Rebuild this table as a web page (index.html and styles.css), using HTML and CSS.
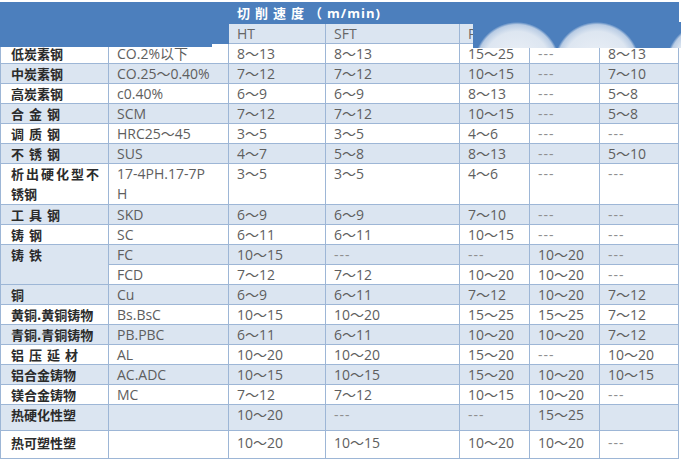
FILE: index.html
```html
<!DOCTYPE html>
<html lang="zh">
<head>
<meta charset="utf-8">
<title>切削速度</title>
<link rel="stylesheet" href="styles.css">
</head>
<body>
<div class="sheet">
<table class="speed">
<colgroup>
<col class="w1"><col class="w2"><col class="w3"><col class="w4"><col class="w5"><col class="w6"><col class="w7">
</colgroup>
<thead>
<tr class="h1"><th class="corner" rowspan="2" colspan="2"></th><th class="title" colspan="5"><span class="tc">切削速度（</span><span class="tl">m/min)</span></th></tr>
<tr class="h2"><th>HT</th><th>SFT</th><th>P</th><th></th><th>T</th></tr>
</thead>
<tbody>
<tr><td class="name">低炭素钢</td><td>CO.2%以下</td><td>8～13</td><td>8～13</td><td>15～25</td><td class="dash">---</td><td>8～13</td></tr>
<tr class="b"><td class="name">中炭素钢</td><td>CO.25～0.40%</td><td>7～12</td><td>7～12</td><td>10～15</td><td class="dash">---</td><td>7～10</td></tr>
<tr><td class="name">高炭素钢</td><td>c0.40%</td><td>6～9</td><td>6～9</td><td>8～13</td><td class="dash">---</td><td>5～8</td></tr>
<tr class="b"><td class="name sp">合金钢</td><td>SCM</td><td>7～12</td><td>7～12</td><td>10～15</td><td class="dash">---</td><td>5～8</td></tr>
<tr><td class="name sp">调质钢</td><td>HRC25～45</td><td>3～5</td><td>3～5</td><td>4～6</td><td class="dash">---</td><td class="dash">---</td></tr>
<tr class="b"><td class="name sp">不锈钢</td><td>SUS</td><td>4～7</td><td>5～8</td><td>8～13</td><td class="dash">---</td><td>5～10</td></tr>
<tr class="tall"><td class="name"><span class="just">析出硬化型不</span><br>锈钢</td><td>17-4PH.17-7P<br>H</td><td>3～5</td><td>3～5</td><td>4～6</td><td class="dash">---</td><td class="dash">---</td></tr>
<tr class="b"><td class="name sp">工具钢</td><td>SKD</td><td>6～9</td><td>6～9</td><td>7～10</td><td class="dash">---</td><td class="dash">---</td></tr>
<tr><td class="name sp">铸钢</td><td>SC</td><td>6～11</td><td>6～11</td><td>10～15</td><td class="dash">---</td><td class="dash">---</td></tr>
<tr class="b"><td class="name sp" rowspan="2">铸铁</td><td>FC</td><td>10～15</td><td class="dash">---</td><td class="dash">---</td><td>10～20</td><td class="dash">---</td></tr>
<tr><td>FCD</td><td>7～12</td><td>7～12</td><td>10～20</td><td>10～20</td><td class="dash">---</td></tr>
<tr class="b"><td class="name">铜</td><td>Cu</td><td>6～9</td><td>6～11</td><td>7～12</td><td>10～20</td><td>7～12</td></tr>
<tr><td class="name">黄铜.黄铜铸物</td><td>Bs.BsC</td><td>10～15</td><td>10～20</td><td>15～25</td><td>15～25</td><td>7～12</td></tr>
<tr class="b"><td class="name">青铜.青铜铸物</td><td>PB.PBC</td><td>6～11</td><td>6～11</td><td>10～20</td><td>10～20</td><td>7～12</td></tr>
<tr><td class="name sp">铝压延材</td><td>AL</td><td>10～20</td><td>10～20</td><td>15～20</td><td class="dash">---</td><td>10～20</td></tr>
<tr class="b"><td class="name">铝合金铸物</td><td>AC.ADC</td><td>10～15</td><td>10～15</td><td>15～20</td><td>10～20</td><td>10～15</td></tr>
<tr><td class="name">镁合金铸物</td><td>MC</td><td>7～12</td><td>7～12</td><td>10～15</td><td>10～20</td><td class="dash">---</td></tr>
<tr class="b r27"><td class="name">热硬化性塑</td><td></td><td>10～20</td><td class="dash">---</td><td class="dash">---</td><td>15～25</td><td></td></tr>
<tr class="r28"><td class="name">热可塑性塑</td><td></td><td>10～20</td><td>10～15</td><td>10～20</td><td>10～20</td><td class="dash">---</td></tr>
</tbody>
</table>
<div class="mask-left"></div>
<div class="mask-right"></div>
</div>
</body>
</html>
```
FILE: styles.css
```css
html, body {
  margin: 0;
  background: #ffffff;
}
.sheet {
  position: relative;
  width: 681px;
  height: 460px;
  padding-top: 2px;
  box-sizing: border-box;
  overflow: hidden;
}
.speed {
  border-collapse: collapse;
  table-layout: fixed;
  width: 678px;
  font-family: "Open Sans", "Noto Sans CJK SC", sans-serif;
  font-size: 14px;
  color: #5e5e5e;
}
.w1 { width: 108px; }
.w2 { width: 120px; }
.w3 { width: 97px; }
.w4 { width: 134px; }
.w5 { width: 70px; }
.w6 { width: 70px; }
.w7 { width: 79px; }

.speed th,
.speed td {
  border: 1px solid #9db6d6;
  padding: 0 0 0 8px;
  height: 19px;
  line-height: 19px;
  vertical-align: top;
  text-align: left;
  white-space: nowrap;
  overflow: hidden;
}
.speed tr { height: 20px; }

.h1 th {
  background: #4c7fbd;
  border-color: #4c7fbd;
  color: #ffffff;
  font-family: "Noto Sans CJK SC", sans-serif;
  font-size: 13px;
  font-weight: 700;
  padding-left: 8px;
}
.h1 .corner {
  background: #4c7fbd;
  border-color: #4c7fbd;
}
.tc { letter-spacing: 5px; }
.tl { letter-spacing: 1px; font-family: "Open Sans", sans-serif; }

.h2 th {
  background: #dbe5f1;
  color: #666666;
  font-weight: 400;
  font-size: 14px;
}

.b td { background: #dbe5f1; }

.speed td.name {
  padding-left: 10px;
  font-family: "Noto Sans CJK SC", sans-serif;
  font-size: 13px;
  font-weight: 700;
  color: #2b2b2b;
}
.speed td.sp { letter-spacing: 5px; }
.just { letter-spacing: 2px; }

.dash { color: #8f8f8f; letter-spacing: 1px; }

.tall td { height: 39px; line-height: 20px; }
.r27 td { height: 25px; line-height: 20px; }
.r28 td { height: 27px; line-height: 24px; }
.tall { height: 40px; }
.r27 { height: 26px; }
.r28 { height: 28px; }

.mask-left {
  position: absolute;
  left: 0;
  top: 2px;
  width: 212px;
  height: 45px;
  background: #4c7fbd;
}
.mask-right {
  position: absolute;
  left: 473px;
  top: 22px;
  width: 208px;
  height: 26px;
  background:
    radial-gradient(circle 43px at 44px 43px, #eef2f8 0, #dde6f1 78%, #b9cce4 94%, rgba(185,204,228,0) 100%),
    radial-gradient(circle 43px at 124px 43px, #eef2f8 0, #dde6f1 78%, #b9cce4 94%, rgba(185,204,228,0) 100%),
    radial-gradient(circle 43px at 236px 43px, #eef2f8 0, #dde6f1 78%, #b9cce4 94%, rgba(185,204,228,0) 100%),
    #4c7fbd;
}
```
